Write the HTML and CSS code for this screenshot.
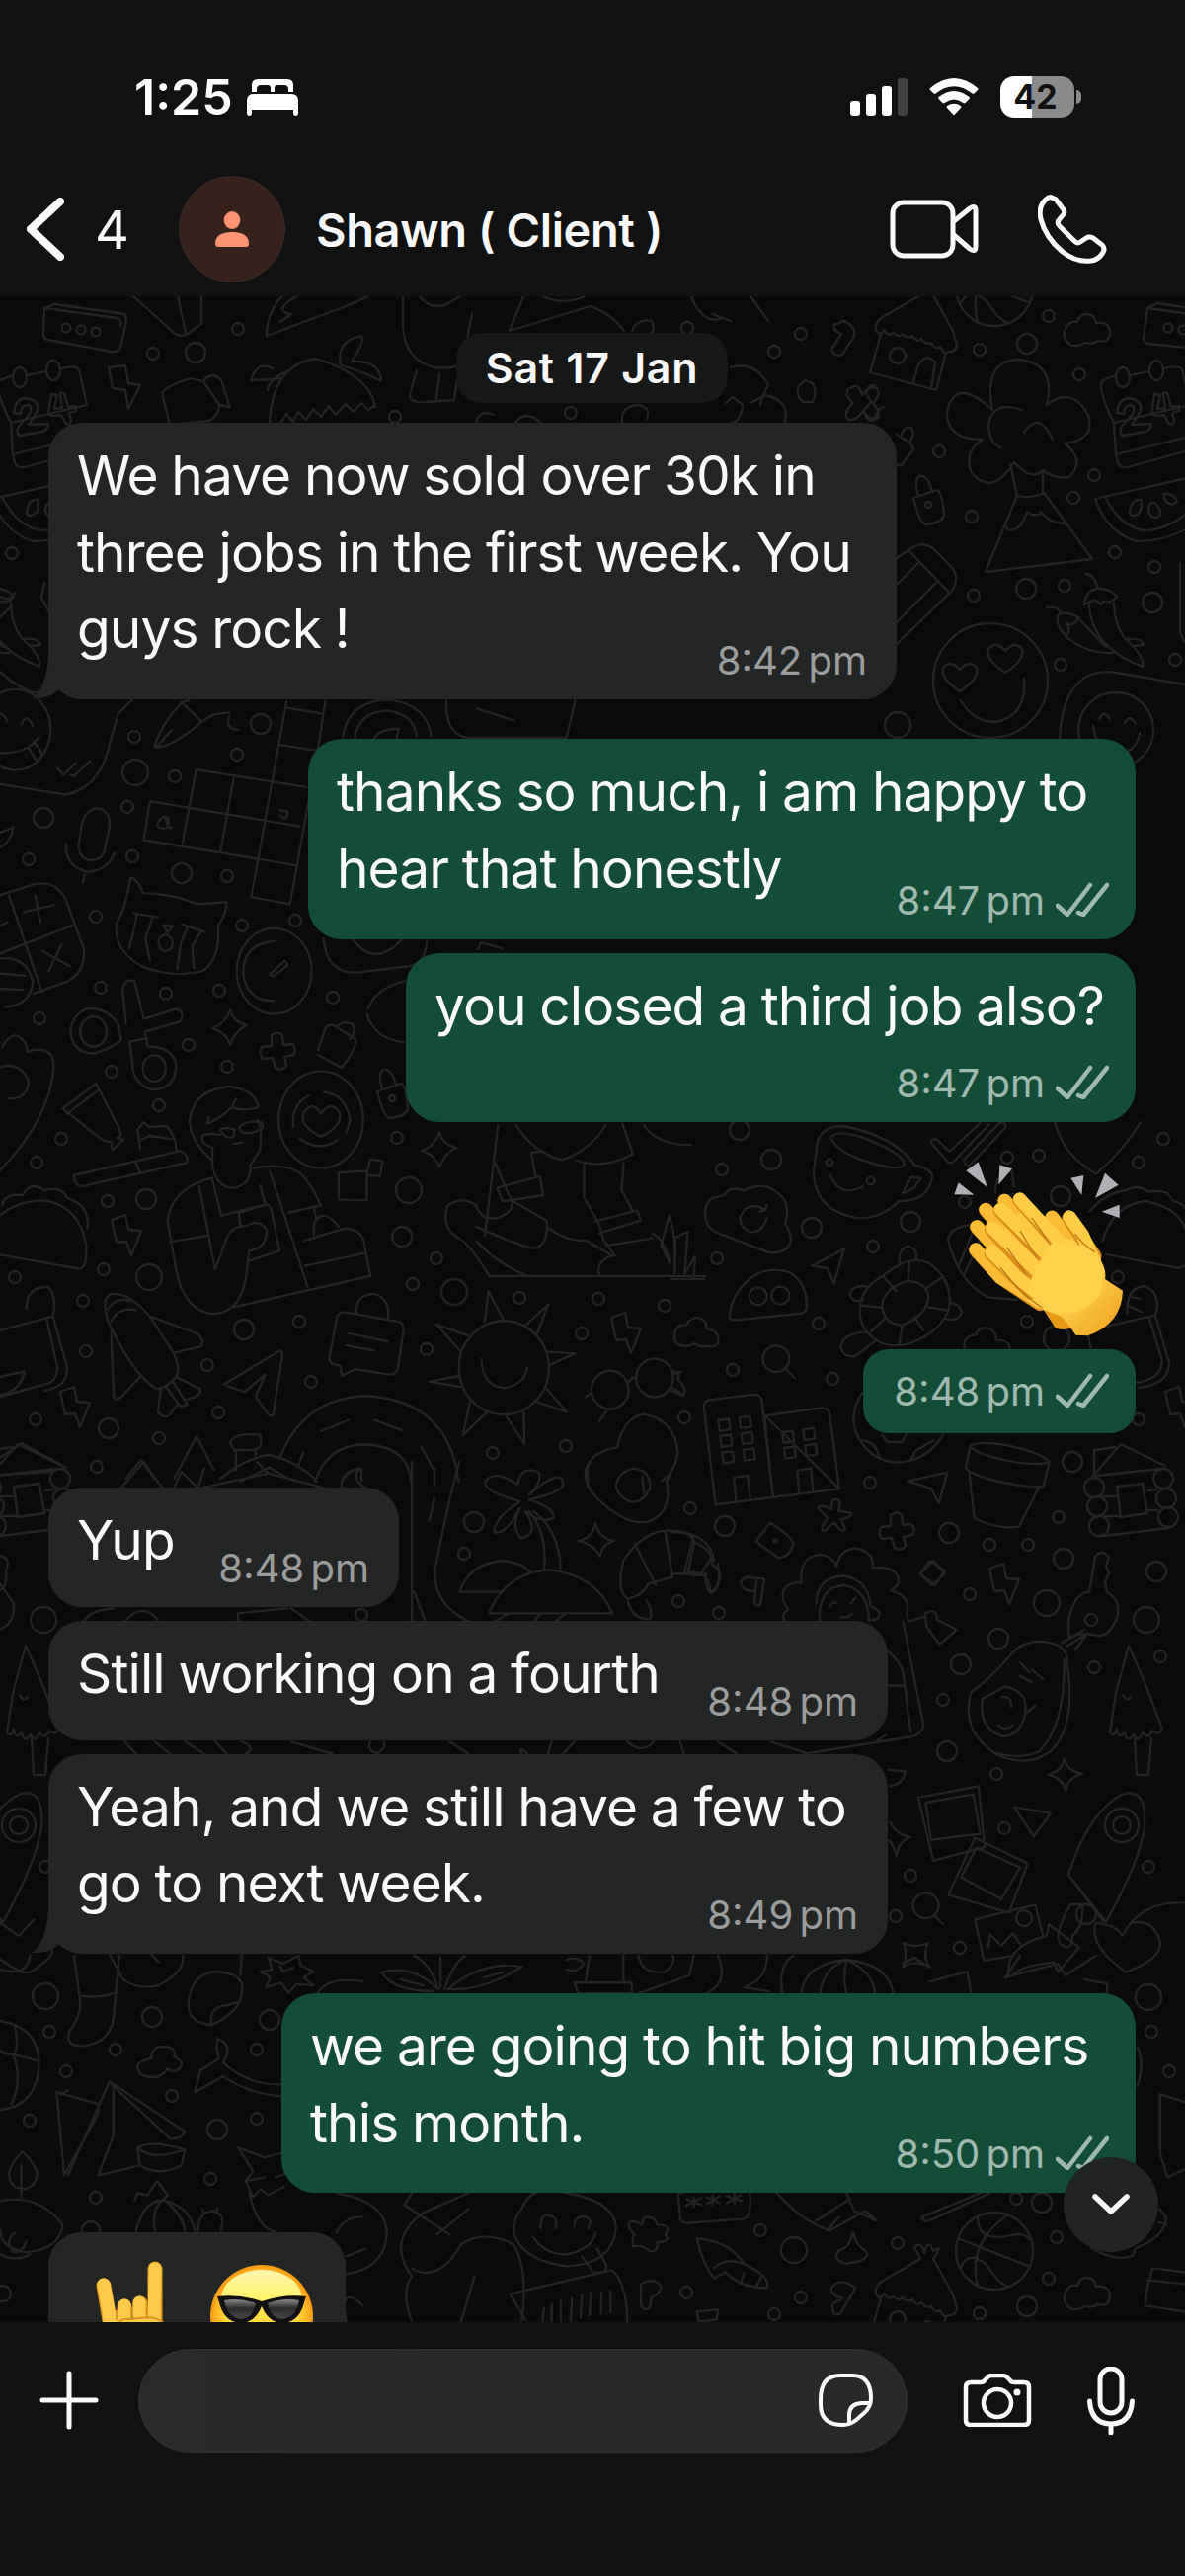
FILE: index.html
```html
<!DOCTYPE html>
<html lang="en">

<head>
  <meta charset="UTF-8">
  <meta name="viewport" content="width=device-width, initial-scale=1.0">
  <title>Shawn ( Client )</title>
  <link rel="stylesheet" href="styles.css">
</head>
<body>
  <div class="phone">

    <!-- Status bar -->
    <div class="status-bar">
      <span class="clock">1:25</span>
      <svg class="bed" width="52" height="37" viewBox="0 0 52 37" fill="#fff">
        <path d="M5 13V6Q5 0 11 0H41Q47 0 47 6V13H42V10Q42 6 38 6H31Q28 6 28 9V13H24V9Q24 6 21 6H14Q10 6 10 10V13Z"/>
        <path d="M0 22Q0 15 7 15H45Q52 15 52 22V34Q52 37 49.500 37T47 34V31H5V34Q5 37 2.500 37T0 34Z"/>
      </svg>
      <div class="status-icons">
        <svg width="58" height="38" viewBox="0 0 58 38" fill="#fff">
          <rect x="0" y="23" width="10" height="15" rx="3"/>
          <rect x="16" y="16" width="10" height="22" rx="3"/>
          <rect x="32" y="8" width="10" height="30" rx="3"/>
          <rect x="48" y="0" width="10" height="38" rx="3" fill="#414141"/>
        </svg>
        <svg width="50" height="38" viewBox="0 0 50 38" fill="#fff">
          <path d="M1 10Q25-10 49 10Q50 11 49 12L45.500 15.500Q44.500 16.300 43.500 15.500Q25 1 6.500 15.500Q5.500 16.300 4.500 15.500L1 12Q0 11 1 10Z"/>
          <path d="M9.500 19Q25 7 40.500 19Q41.500 20 40.500 21L36.500 25Q35.500 25.800 34.500 25Q25 18 15.500 25Q14.500 25.800 13.500 25L9.500 21Q8.500 20 9.500 19Z"/>
          <path d="M18 28Q25 23.500 32 28Q33 29 32 30L26 36.600Q25 37.600 24 36.600L18 30Q17 29 18 28Z"/>
        </svg>
        <div class="battery"><span>42</span></div>
      </div>
    </div>

    <!-- Contact header -->
    <div class="header">
      <svg class="back" width="38" height="64" viewBox="0 0 38 64"><path d="M34 4L4 32L34 60"/></svg>
      <span class="unread">4</span>
      <div class="avatar">
        <svg width="34" height="36" viewBox="0 0 34 36"><ellipse cx="17" cy="9" rx="8.300" ry="9"/><path d="M0 33Q0 21 17 21T34 33Q34 36 31 36H3Q0 36 0 33Z"/></svg>
      </div>
      <span class="name">Shawn ( Client )</span>
      <div class="actions">
        <svg width="90" height="60" viewBox="0 0 90 60"><rect x="3" y="3" width="61" height="54" rx="11"/><path d="M65 22L81 9Q87 5 87 11V48Q87 54 81 50L65 36"/></svg>
        <svg width="70" height="70" viewBox="0 0 70 70"><path d="M16 4Q12 1 8 5Q0 12 3 25Q8 44 25 58Q39 69 54 67Q61 66 65 60Q69 55 65 51L56 44Q52 42 49 44L43 48Q40 50 37 47L22 32Q19 29 21 26L26 20Q28 17 25 14L19 6Q18 4 16 4Z"/></svg>
      </div>
    </div>

    <!-- Conversation -->
    <div class="chat">
      <svg class="wallpaper" width="1200" height="2051" viewBox="0 300 1200 2051">
        <defs>
          <g id="ball"><circle r="39"/><path d="M-35-12L34 15M14-37Q-28-8-17 36M-17-35Q-18-10 12-15Q30-20 35-12M-34 16Q-25-2-7 15Q5 34 14 36"/></g>
          <g id="bolt"><path d="M-15-16L-1-21L2-6L15-5L5 20L0 6L-10 7Z"/></g>
          <g id="cloud"><path d="M-17 15Q-27 8-21-3Q-16-10-10-8Q-8-16-1-16Q8-16 9-7Q23-9 23 3Q22 14 11 11Q6 15-2 13Q-10 18-17 15Z"/></g>
          <g id="spark"><path d="M1-18Q3-6 18-2Q6 3 1 18Q-3 5-17 1Q-4-3 1-18Z"/></g>
          <g id="cross"><path d="M-6-16Q0-21 5-16L6-6L15-7Q20-2 16 4L7 6L9 15Q4 21-2 17L-5 7L-15 8Q-19 3-16-4L-6-5Z"/></g>
          <g id="lock"><path d="M-15-7L9-15Q14-14 16 10Q15 18-2 20Q-8 21-15-7ZM-10-9Q-15-28-8-29Q0-30 4-13"/><circle r="3"/></g>
          <g id="heart"><path d="M0 15Q-20 2-17-9Q-9-18 0-7Q9-18 17-9Q20 2 0 15Z"/></g>
          <g id="house">
            <path d="M-28-48L-66-26Q-75-20-73-12Q-69-6-64-13Q-62-6-55-10Q-50-4-46-9Q-41-3-36-7Q-31 1-27-4Q-22 3-17 0Q-13 8-8 4Q-4 13 0 9Q8 10 9 2L5-12L-15-48M-28-48L-34-60Q-26-66-24-54Q-20-70-15-56Q-4-64-15-48M-68-8L-79 30L-12 48L-2 10M-35 40L-30 22Q-22 10-13 20L-17 46"/><circle cx="-51" cy="13" r="8"/>
          </g>
          <g id="tree">
            <path d="M125 115Q115 65 152 64Q190 68 180 110Q205 90 222 120Q230 145 198 149Q220 165 203 183Q190 186 176 176Q165 188 147 168Q125 203 104 179Q95 158 115 145Q78 145 79 117Q87 80 125 115M155 115Q125 105 121 130Q122 150 134 153M157 138Q172 115 186 145M143 170L150 202Q163 205 176 200V178M150 202L118 279L226 266L178 200M160 218Q153 240 140 236L138 230M160 218Q170 225 174 218Q183 230 198 230"/>
          </g>
          <g id="calendar">
            <path d="M250 80L237 85Q230 92 248 128L250 160L320 143M250 160L252 169Q255 174 262 173L345 150M265 80L283 76M299 73Q318 68 318 78L325 110L248 128"/>
            <ellipse cx="257" cy="82" rx="7" ry="10"/><ellipse cx="291" cy="75" rx="7" ry="10"/>
            <path d="M251 118Q253 100 268 104Q278 108 274 118L266 130L286 129Q286 135 280 137L257 141Q250 136 262 125Q272 115 266 110Q258 110 258 119ZM289 99L286 119Q289 122 299 120L303 128Q308 132 309 126L307 118L314 116V111L306 112L302 98Q297 96 298 100L300 113L292 114L295 100Z"/>
            <path d="M229 205L340 180M229 205Q240 238 270 248Q310 248 335 225M240 205Q255 233 278 237Q305 237 330 212M264 218Q266 205 275 206Q278 220 268 222Q264 222 264 218ZM283 215Q286 202 294 215Q297 224 289 224Q283 222 283 215ZM298 200Q307 198 312 207Q307 214 300 207Z"/>
          </g>
          <g id="chillies">
            <path d="M219 281Q228 281 232 296M218 312Q220 295 235 296Q247 297 251 305L242 310Q239 306 235 312Q229 306 226 308Q223 310 218 312ZM223 313Q225 355 277 375Q280 365 258 345Q248 330 248 310M180 315Q190 313 195 321M200 345Q187 330 192 322Q200 318 212 325Q208 335 201 331Q204 339 200 345ZM199 344Q220 362 247 361M212 326L240 355M262 347Q275 345 278 353L267 354"/>
          </g>
          <g id="cabin">
            <path d="M426 365L455 332L500 354M430 364L495 357M428 361V338L450 335M437 385H453M483 379L491 378M439 405H455M484 399H492M437 425L503 417M451 375L477 372L482 402L455 406Z"/>
            <circle cx="428" cy="376" r="10"/><circle cx="431" cy="395" r="10"/><circle cx="433" cy="415" r="10"/><circle cx="498" cy="367" r="10"/><circle cx="501" cy="387" r="10"/><circle cx="503" cy="406" r="10"/>
          </g>
          <g id="pine"><path d="M0-66L-13-18L-19 22Q-14 28-12 18Q-11 30-4 22Q-2 34 5 24Q10 34 14 22Q20 30 24 20Q30 26 34 18L14-34ZM6 28L8 65H20L23 28M-6-16Q-2-8 2-14"/></g>
          <g id="rocket"><path d="M-36 18Q-15-48 20-64Q44-70 41-30Q36 5 2 66ZM-36 18L0 66M-34 48Q-52 80-44 88Q-33 98-32 80Q-20 70-22 48Z"/><circle cx="18" cy="-32" r="17"/><circle cx="18" cy="-32" r="9"/></g>
          <g id="guitar"><path d="M6-56Q12-64 20-56L17-46L20-40L16-30L18-20Q33-12 28 6Q20 26 8 24Q-8 20-20 26Q-24 4-12-14Q-4-22 0-20ZM-2 22L-14 38"/><circle cx="2" cy="8" r="6"/></g>
        </defs>

        <use href="#ball" x="1007" y="291"/><use href="#ball" x="1007" y="2279"/>
        <use href="#house" x="960" y="347"/><use href="#house" x="960" y="2335"/>
        <use href="#tree" x="880" y="300"/>
        <use href="#calendar" x="880" y="300"/><use href="#calendar" x="-237" y="300"/>
        <use href="#chillies" x="880" y="300"/><use href="#chillies" x="-237" y="300"/>
        <use href="#cloud" x="1101" y="334"/><use href="#cloud" x="1101" y="2322"/>
        <use href="#cabin" x="680" y="1130"/><use href="#cabin" x="-437" y="1130"/>
        <use href="#pine" x="1143" y="1732"/><use href="#pine" x="26" y="1732"/>
        <use href="#rocket" x="1118" y="1880"/><use href="#rocket" x="1" y="1880"/>
        <use href="#guitar" x="1103" y="1632"/>

        <!-- next to the first incoming message -->
        <path d="M1162 312L1172 307L1220 314M1162 312L1158 343Q1158 347 1164 348L1220 354M1162 312L1220 320"/>
        <path d="M45 312L55 308L127 318L128 325L122 352Q120 357 113 356L48 344Q43 343 44 337ZM45 312L118 322Q124 324 122 330"/>
        <circle cx="67" cy="332" r="4.500"/><circle cx="82" cy="334" r="4.500"/><circle cx="97" cy="336" r="4.500"/>
        <circle cx="1183" cy="332" r="4.500"/><circle cx="1198" cy="334" r="4.500"/>
        <path d="M908 440L922 448L925 455L912 472L908 470M913 440Q915 432 922 433Q928 437 921 448"/>
        <use href="#lock" x="940" y="511"/>
        <path d="M908 565L920 557Q935 545 948 558L965 576Q972 586 964 598L908 652M920 557L962 601M908 592L930 570M908 630L950 588"/>
        <circle cx="1003" cy="689" r="58"/>
        <use href="#heart" x="972" y="685"/><use href="#heart" x="1018" y="666"/>
        <path d="M973 709Q985 731 1008 731Q1040 725 1037 687"/>
        <path d="M1073 748Q1075 700 1100 685Q1115 678 1130 681L1200 693M1195 570V640Q1198 650 1205 655"/>
        <circle cx="1130" cy="739" r="38"/><path d="M1113 728Q1118 718 1124 728M1139 732Q1144 722 1150 733M1107 735Q1110 765 1140 762Q1153 755 1154 742"/>
        <path d="M886 390Q878 390 877 398L882 407L875 415Q876 426 884 426L890 415L895 412M858 395Q870 385 873 400Q880 390 888 393Q893 400 884 408Q893 418 888 424Q880 425 874 416Q866 428 858 424Q854 416 864 408Q856 402 858 395Z"/>
        <path d="M815 385L823 388Q828 397 823 407L813 407Q806 400 808 392ZM850 328Q852 322 860 328Q868 335 864 342L853 359Q845 362 842 354L852 338Q843 335 845 328Z"/>

        <!-- top strip and palm hut -->
        <path d="M135 300L175 336Q182 342 190 338L204 328V300M180 300L188 337M270 340Q270 305 305 285M270 340L350 310Q378 300 382 290M284 326L295 318Q275 315 300 300M273 429Q275 370 320 363Q375 380 380 412M285 427L290 419L297 427L302 417L310 425L317 414L325 422L333 411L340 420L350 409L358 417L366 408L373 415L380 410M276 373Q260 365 254 385Q270 385 284 383M290 376Q272 385 271 395M345 370Q340 345 366 340Q370 345 356 366Q385 365 386 386Q365 375 345 370M164 398Q170 390 193 383L206 386L222 410Q222 420 212 426L172 430Z M206 386Q214 375 224 385L233 412L222 410"/>
        <path d="M110 372L127 370L130 388L142 390L130 414L127 395L114 393ZM408 300V330Q410 365 440 372Q460 375 472 365M425 300Q440 320 465 300M478 317L470 360M422 375L415 400Q415 408 430 407L460 405M445 378L442 404M465 372L460 404M530 300L516 335L598 310Q620 318 632 335M550 300Q570 310 592 300M700 300Q712 330 732 322M740 325L722 318M760 300L778 325M640 335Q645 322 660 325Q665 335 655 342M740 372Q765 365 778 390Q772 400 770 410M735 408L742 402L752 410Q750 428 740 428M760 408L775 400Q800 405 795 428M630 428Q628 412 645 410Q660 412 655 424M482 428Q485 414 500 420M522 428Q532 414 548 428"/>
        <path d="M0 604Q10 610 15 600M0 625L10 615M0 680L12 690Q35 705 40 700M45 590L42 605L50 620"/>

        <!-- left column beside the outgoing messages -->
        <g transform="translate(0 700) scale(.4464 .5102)">
          <circle cx="35" cy="76" r="80"/>
          <path d="M0 44Q12 48 16 60M48 66Q60 40 74 68M0 122Q60 125 90 90M64 110L80 134Q95 140 94 120L76 98M0 184L150 205Q230 190 250 100L268 45L300 16M130 152L144 166L172 142M160 166L168 168L204 138"/>
          <path d="M350 108Q370 60 412 22L458 60Q400 105 356 112ZM356 110L390 76M412 22L430 16M458 60L484 46L520 42M520 50Q510 75 540 76M445 155L695 190M340 218L680 268M326 295L672 345M570 408L658 422M445 155L414 302M340 218L326 295M530 172L500 318M650 20L570 408M738 18L722 110L658 422M648 32L728 44M635 106L722 118"/>
          <path d="M358 262Q365 245 382 250Q385 275 370 272Q355 272 358 262M376 250Q380 275 390 270M635 236L652 238Q652 260 635 246M778 90Q790 20 878 16Q970 25 978 90M805 92Q815 40 878 38Q940 45 945 90M850 92Q860 75 905 74L900 92M1012 18Q1010 85 1060 92H1285L1305 18M1082 34L1166 58"/>
          <path d="M186 262Q200 225 232 234Q252 245 248 270L236 320Q225 338 198 334Q178 328 178 305ZM150 302Q148 350 200 358Q245 355 260 320M192 362L188 380M0 310Q25 300 30 270L0 280"/>
          <path d="M0 404L80 382Q130 375 150 415L190 510Q195 555 155 575L75 600M20 404L95 596M0 520L165 464M54 438L122 424M80 406L92 458M95 515L158 545M140 502L110 556M0 465L18 458M0 530Q60 525 74 575Q70 625 10 626M0 560L58 564M0 590L52 592"/>
          <path d="M296 370Q310 370 325 400Q350 400 400 408L450 422L514 418Q515 440 495 465Q500 530 460 555Q390 570 320 545Q255 510 265 460Q285 430 296 370ZM302 440L358 448M412 462L466 478M310 444L302 480L292 512M346 448L330 490L340 535M425 468L410 500L402 552M455 478L436 505L440 550M370 464L392 466L380 478ZM365 512Q350 490 375 482Q400 490 388 510Q375 520 365 512Z"/>
          <circle cx="622" cy="555" r="85"/><path d="M625 495Q550 500 552 560Q560 615 622 614M612 562L645 535Q655 540 650 545L620 566Z"/>
          <path d="M286 660L278 590Q285 568 305 575L326 650L400 630Q420 635 410 655L330 675M330 680L335 705Q395 705 400 745Q395 790 345 790Q300 780 300 735L294 695M294 695L335 688M275 692L268 660Q240 625 195 630Q160 645 160 680Q170 720 215 718Q250 710 275 692"/>
          <circle cx="212" cy="675" r="30"/><circle cx="350" cy="748" r="26"/>
          <path d="M0 950Q80 880 110 800Q130 740 115 720Q95 705 62 715Q60 690 36 682Q18 685 5 705M0 745Q50 735 65 775Q60 810 20 808M142 828L218 778L272 870Q278 885 265 885L280 890L255 910L252 895L232 890ZM152 838L225 790M168 960L408 912Q430 920 424 935L185 982Q168 980 168 960ZM308 934L318 956M318 908L312 870L325 855L338 864L378 862Q400 885 400 912M320 890L340 882L390 888"/>
          <path d="M480 930Q430 890 430 850Q440 790 520 784Q580 790 586 825Q550 835 525 825Q505 845 470 858L474 845M536 808L525 825M480 905Q450 895 462 880L480 878L500 880M482 905V940Q490 985 530 985Q570 980 568 940L590 910L592 870L585 850M500 870Q510 862 532 870L530 884Q510 890 500 870ZM542 865Q560 850 594 855L596 865Q575 880 550 875ZM530 898L550 895M482 965Q390 985 380 1050L400 1150Q420 1235 490 1235Q550 1230 560 1150L565 1110Q605 1105 605 1070Q590 1045 560 1060L545 1062L542 1035L605 1018Q615 1020 618 1040L634 1110L565 1130M530 1222L840 1160L825 1090Q815 1065 780 1066L690 1090M385 1092L470 1080M452 982L488 1148L510 1095Q520 1065 545 1062M482 970L502 1040L595 1020M575 946Q640 935 680 955Q705 975 728 1020L655 1034M612 952L698 1182M590 980L602 1018M692 1140L825 1115M712 1078L712 1058Q730 1020 768 1062M712 1025L718 1050"/>
          <circle cx="728" cy="850" r="96"/><path d="M728 884Q675 860 690 835Q710 810 728 838Q750 810 770 835Q780 860 728 884ZM665 865Q660 820 700 802M735 795Q785 800 794 850L786 875M680 888Q725 915 766 890"/>
          <path d="M768 955L832 952V1010L768 1008ZM840 928L868 932L862 962L832 960ZM835 630Q850 590 918 575M832 640Q850 690 915 696M734 490Q740 560 810 558L930 545Q965 540 968 495M800 492Q850 550 912 492M1085 512L1090 498L1140 510"/>
          <path d="M1130 860L1100 1080M1120 930L1160 1010L1240 1050M1170 860Q1210 915 1275 930Q1340 910 1375 860M1205 915L1232 912M1205 915L1215 965M1128 985L1225 962L1232 1000L1140 1012ZM1240 1050Q1245 1095 1215 1105Q1190 1105 1080 1062M1160 1010Q1170 1030 1130 1045Q1090 1050 1080 1020Q1050 1000 1015 1020Q1000 1065 1040 1085Q1065 1095 1110 1160H1600M1080 1090Q1120 1130 1195 1160M1245 1065Q1280 1090 1330 1090L1390 1120Q1350 1130 1360 1160M1325 935L1325 1005L1358 1055L1370 1090L1395 1120M1415 935L1410 990L1435 1030M1350 1052L1445 1030L1454 1050L1360 1075M1375 1100L1480 1085M1308 930Q1370 950 1436 918L1412 858M1460 860Q1490 900 1568 900M1480 1075Q1510 1090 1520 1135L1500 1100L1518 1040Q1535 1080 1530 1135"/>
          <path d="M0 1040Q40 1010 100 1010Q180 1020 196 1100Q198 1150 175 1145L0 1118M5 1020Q10 995 50 1000Q70 970 100 990Q140 980 152 1005Q205 1020 198 1065M60 1225Q60 1180 110 1182Q130 1200 120 1240L0 1268M105 1242L130 1340Q132 1370 100 1375L0 1400M120 1240L152 1340Q155 1380 100 1388M0 1360Q50 1350 56 1350Q45 1390 0 1396"/>
          <path d="M245 1250Q230 1205 250 1196Q290 1190 340 1240L395 1315Q410 1345 400 1360Q375 1385 355 1384Q310 1360 265 1285ZM245 1225Q265 1200 295 1210M252 1250Q270 1220 310 1228M340 1240L450 1275Q465 1290 455 1300L396 1312M252 1270L258 1400Q265 1410 275 1400L318 1360M365 1384L358 1430Q375 1445 385 1435L405 1412M375 1378L410 1420L425 1415L392 1370M400 1360L455 1385Q455 1400 420 1405"/>
          <path d="M508 1375L635 1308Q642 1310 640 1320L620 1435Q612 1442 605 1430L580 1400L602 1355L555 1390L515 1378M765 1240Q770 1230 785 1232L900 1250Q918 1252 915 1270L902 1345Q895 1358 880 1355L805 1345L775 1358L772 1338L755 1335Q745 1330 748 1318ZM790 1274L880 1290M785 1298L850 1308M808 1232Q808 1195 850 1196Q885 1205 880 1245"/>
          <ellipse cx="1143" cy="1342" rx="102" ry="93"/><path d="M1092 1325Q1095 1380 1145 1382Q1190 1375 1196 1342M1100 1250L1108 1190L1144 1250M1190 1260L1244 1216L1218 1275M1240 1310L1304 1314L1244 1338M1236 1380L1286 1430L1212 1408M1188 1430L1190 1494L1148 1438M1105 1430L1050 1476L1066 1410M1045 1380L974 1370L1042 1358M1045 1310L990 1256L1068 1280"/>
          <ellipse cx="1384" cy="1386" rx="42" ry="38"/><ellipse cx="1485" cy="1362" rx="42" ry="38"/><path d="M1425 1372Q1432 1360 1444 1362M1342 1392L1328 1400M1378 1425L1360 1448M1525 1355L1545 1350M1520 1380L1550 1395"/>
          <path d="M635 1520Q690 1400 835 1398Q1020 1410 1040 1568M715 1568Q740 1495 830 1494Q930 1500 932 1568M728 1468L790 1446M850 1446L912 1466M955 1498L986 1548M688 1510L675 1540M775 1568Q790 1545 820 1542V1568M522 1490Q530 1470 590 1475Q600 1505 570 1505H530ZM535 1508V1545M580 1508V1515M500 1562Q560 1520 610 1515Q680 1530 720 1568M545 1568L610 1540L670 1568M395 1562L446 1478L485 1545M285 1562L320 1525L350 1562M0 1520L50 1492L150 1540M0 1555L120 1548M1335 1568Q1320 1510 1400 1500Q1415 1440 1460 1434Q1530 1445 1538 1510Q1530 1550 1500 1568"/>
        </g>
        <use href="#spark" x="232" y="1040"/><use href="#spark" x="444" y="1164"/>
        <use href="#cross" x="281" y="1064"/><use href="#lock" x="397" y="1112"/>
        <path d="M322 1063L330 1040Q335 1035 341 1040L360 1052Q362 1060 346 1081L322 1068M341 1040Q347 1032 357 1037Q362 1045 354 1052"/>
        <use href="#bolt" x="128" y="1251"/><use href="#bolt" x="76" y="1425"/><use href="#bolt" x="634" y="1350"/>

        <!-- around the clap and the building block -->
        <g transform="translate(680 1130) scale(.3333)">
          <path d="M440 110Q440 30 520 30Q680 60 740 150Q790 160 792 185Q780 260 690 258Q640 310 570 310Q430 290 432 160ZM484 65Q500 40 580 65Q700 110 708 145Q690 170 600 140Q500 110 484 65ZM482 178Q510 250 582 214M712 215L728 185L758 188L735 220L702 234Z"/>
          <circle cx="480" cy="141" r="10"/><circle cx="605" cy="196" r="12"/>
          <path d="M110 330Q90 280 120 250L160 240Q175 210 220 226Q290 190 340 250Q360 290 345 325Q380 380 345 405Q320 420 290 412L160 362Q120 350 110 330ZM290 310Q275 355 240 352Q200 335 212 300Q235 255 285 285L268 290M285 285L290 270"/>
          <path d="M176 610Q180 550 230 500Q290 450 360 475Q415 510 410 585Q405 598 390 600L190 620Q176 618 176 610Z"/><circle cx="263" cy="547" r="27"/><circle cx="331" cy="545" r="27"/>
          <path d="M425 455L524 404L494 508L474 462ZM0 495H100M10 480L12 370L50 350L40 480L72 425L68 490"/>
          <path d="M575 570Q580 520 650 480Q720 420 780 445Q860 500 842 590Q820 640 770 670Q700 710 640 690Q560 650 575 570ZM640 570Q650 520 720 500Q785 510 780 555Q770 610 700 635Q640 630 640 570ZM645 488L682 532M724 445L718 498M820 490L772 525M840 590L780 580M765 650L738 610M692 695L700 638M605 655L648 615M575 575L640 582M692 445Q690 400 718 396Q755 405 740 440M600 518Q550 510 542 540Q545 568 582 560M845 565Q885 575 880 600Q870 625 830 615M590 655Q520 660 514 700Q520 735 560 728L620 682"/>
          <path d="M788 80Q790 65 808 72L845 108L938 20M788 80L840 140Q850 145 860 135L965 25M890 130L995 22Q1015 15 1015 35L905 150Q885 150 890 130M1165 18Q1190 120 1290 175Q1370 110 1425 18M985 230Q980 200 1010 170L1035 168L1040 215M840 375Q850 335 910 330M840 375Q870 500 960 550L1050 558M875 450L920 340M890 480L945 360M1270 290Q1320 230 1385 225Q1410 205 1450 230Q1510 220 1520 255Q1560 270 1560 280M1310 380Q1340 270 1440 258Q1540 280 1560 340M1320 420L1540 462L1560 455M1385 600Q1380 520 1440 516Q1490 540 1470 605L1270 650M1450 610L1490 740Q1490 800 1410 810M1470 605L1512 750Q1510 815 1420 825M1265 660L1275 710M1400 550L1425 555M1385 575L1430 595"/>
          <path d="M10 660Q15 630 45 635Q60 605 90 615Q110 625 105 645Q145 650 143 685Q135 705 110 698Q90 705 70 690Q50 705 25 695Q5 690 10 660ZM890 705Q885 665 925 665Q935 635 965 645Q990 655 985 680Q1030 680 1028 710"/>
          <circle cx="318" cy="737" r="40"/><path d="M345 765L374 795M0 775Q30 770 20 800Q50 830 35 850L0 835"/>
          <path d="M134 1180L98 880Q100 865 115 862L250 846Q270 846 274 862L308 1155M284 910L455 886Q475 886 480 900L510 1132ZM134 1180L510 1132M196 1170L190 1098L232 1092L240 1165M388 1145L382 1075L424 1070L430 1140M283 910L308 1155"/>
          <path d="M142 924L174 920L178 952L146 957ZM206 916L238 912L242 944L210 948ZM148 972L180 968L184 1000L152 1005ZM212 964L244 960L248 992L216 996ZM154 1022L186 1018L190 1050L158 1055ZM218 1014L250 1010L254 1042L222 1046ZM336 960L368 956L372 988L340 992ZM400 952L432 948L436 980L404 984ZM342 1008L374 1004L378 1036L346 1040ZM406 1000L438 996L442 1028L410 1032Z"/>
          <path d="M580 840Q540 900 560 960Q600 1050 690 1052Q780 1045 825 968M580 985Q625 990 632 1040M640 968L655 990H700L712 968M730 1040L740 1018L795 985M720 1108L838 1082L812 1176L790 1132Z"/>
          <path d="M908 1000Q940 985 1020 1000Q1120 1020 1148 1050L1130 1125Q1100 1130 1020 1115Q920 1095 894 1070ZM910 1005Q930 1030 1050 1052Q1120 1060 1146 1052M905 1085L920 1220Q980 1255 1055 1248L1115 1130"/>
          <path d="M445 1190Q450 1175 485 1195L490 1165Q510 1160 512 1175L508 1200L545 1205Q550 1220 515 1225L528 1255Q520 1270 495 1235L465 1260Q445 1255 475 1222ZM256 1292L300 1235Q370 1280 370 1300Q360 1340 325 1342ZM755 1390L785 1350L830 1380L800 1425Z"/>
          <circle cx="316" cy="1291" r="5"/>
          <path d="M210 1420Q215 1395 250 1402L282 1405L270 1485Q255 1490 252 1480L258 1410M210 1420Q220 1445 250 1442M0 1265Q60 1260 70 1295Q130 1320 122 1360Q150 1380 148 1400Q140 1445 115 1445Q100 1420 105 1390Q85 1400 50 1390H0M70 1295L50 1385M122 1340L90 1390"/>
          <path d="M345 1535Q330 1510 355 1500Q320 1450 355 1425Q370 1415 395 1418Q385 1340 450 1332Q490 1335 502 1368Q510 1315 560 1312Q620 1325 610 1372Q685 1365 690 1410Q690 1430 665 1440Q730 1460 715 1510L720 1535M440 1480Q440 1400 525 1396Q600 1410 605 1490M450 1535Q445 1430 525 1425Q600 1440 600 1535M605 1490Q640 1500 630 1520Q620 1535 600 1528M480 1492Q490 1475 500 1478M545 1480L560 1462M515 1522Q535 1525 548 1512M720 1535L770 1520"/>
        </g>
        <use href="#cross" x="908" y="1550"/><use href="#bolt" x="1017" y="1604"/><use href="#bolt" x="1195" y="1425"/>

        <!-- between and beside the lower messages -->
        <g transform="translate(0 1480) scale(.7653 .3333)">
          <path d="M160 80L190 0L215 80M230 80L240 30L262 80L270 20M265 80L355 35L430 80M355 35L340 0M452 80Q450 30 475 20Q465 60 485 80M545 0V485M608 0Q595 100 578 300Q565 420 620 485M575 20V70M575 110L568 180M548 395L562 480"/>
          <path d="M688 120Q640 90 642 60Q655 20 685 70Q688 10 712 30Q720 55 700 100Q740 20 745 60Q750 90 700 115Q735 140 732 170Q715 190 695 150Q715 220 690 232Q675 200 688 140Q670 220 655 215Q650 180 688 120M700 150Q725 220 720 325M706 150Q740 210 742 325M608 395Q620 310 665 300Q690 305 702 335M608 395H665M648 455Q670 335 728 328Q790 345 810 460H648M655 485L672 462M706 485L715 462M735 485L748 462"/>
          <path d="M780 0Q765 50 790 110Q830 200 860 180Q890 150 882 60L895 0M840 20Q862 30 860 80Q850 130 832 120Q815 100 815 70Q820 25 840 20ZM850 45L852 95"/>
          <path d="M825 300Q850 210 885 208Q940 215 945 300M825 300Q815 390 830 415Q850 410 858 370L890 350M840 250L868 375M880 210L890 350M918 225L905 340M830 415Q835 480 860 478Q865 450 855 420M905 340Q940 320 940 400Q955 380 950 310"/>
          <path d="M1195 485L1222 800Q1220 830 1205 835L1065 887M1172 570Q1190 600 1195 640L1205 820M1175 680H1195M1172 830L1160 848M1175 935L1198 940Q1195 980 1178 985"/>
          <path d="M1375 545Q1415 550 1412 610Q1425 800 1390 880Q1360 930 1320 890Q1270 820 1285 700Q1310 660 1340 580Q1350 550 1375 545ZM1408 600Q1410 800 1375 880Q1350 905 1320 885M1405 550L1435 510M1412 560L1440 520M1330 682Q1365 700 1355 780Q1345 840 1325 832Q1295 810 1300 720ZM1325 715Q1340 710 1338 745M1320 800Q1330 820 1340 800M1350 610L1362 640M1365 630L1380 660M1350 650L1365 670M1360 760L1370 740"/>
          <path d="M1215 1020L1295 985L1303 1170L1235 1212ZM1225 1035L1288 1010L1297 1130L1232 1148ZM1290 1142L1360 1220L1335 1370L1255 1315ZM1292 1172L1350 1232L1325 1328L1272 1262ZM1342 1048L1390 1068L1368 1138ZM1290 1390L1370 1345L1380 1440M1290 1390L1302 1515L1340 1500M1308 1475L1310 1435L1325 1470L1340 1432L1350 1465M1335 1560Q1330 1470 1385 1440L1388 1405L1428 1475L1400 1550L1395 1520Q1350 1530 1340 1560"/>
          <ellipse cx="1225" cy="1348" rx="17" ry="38"/><path d="M1236 1378L1248 1405"/>
          <path d="M1195 1460Q1210 1480 1228 1462Q1220 1500 1230 1535Q1210 1510 1195 1535Q1202 1490 1195 1460ZM1178 1095Q1185 1130 1205 1140Q1190 1150 1186 1198Q1182 1160 1176 1150M1450 1400Q1480 1410 1485 1440Q1510 1330 1568 1340M1450 1400Q1440 1470 1490 1550Q1550 1500 1530 1430Q1520 1390 1500 1400M1224 460Q1240 440 1240 480L1266 510L1243 555L1226 500ZM1235 300L1250 340L1233 375L1218 340ZM1408 900Q1412 940 1432 948Q1412 960 1411 1000Q1406 960 1387 950Q1406 940 1408 900ZM788 185Q792 230 812 240Q796 250 794 288Q786 250 766 240Q785 230 788 185Z"/>
          <path d="M165 850L180 887M205 850L225 887M245 850L270 887M285 850L300 887M320 850Q340 870 325 887M385 850L440 887M490 850Q485 880 500 885Q510 870 508 850M595 850L620 887M690 887Q685 862 698 887M725 887L730 850M760 850L745 887M900 850L905 887M830 850Q850 890 865 850M950 850L975 887M1020 850L1070 887M110 485Q120 450 150 445M165 485Q190 420 210 485M315 485V460L380 445M385 445L410 485M0 285Q15 290 8 330Q10 380 0 390M0 510Q20 490 18 430L0 370"/>
          <path d="M0 1400L25 1440L45 1390M0 1510Q30 1560 40 1550Q75 1500 68 1480M145 1495L160 1560M200 1495L210 1520M320 1495L318 1560"/>
        </g>

        <g transform="translate(0 1980) scale(.7653 .4005)">
          <path d="M98 0L105 100Q110 150 92 190Q85 230 110 228Q145 220 150 160L158 0M105 100Q130 110 155 92M155 40Q170 90 210 75Q245 40 242 0M0 35Q35 55 40 0"/>
          <path d="M345 40L360 35L355 5L375 20L395 0L398 25L415 40L402 55L415 75L392 72L382 95L372 68L352 80L358 55ZM370 25L375 40L388 30M420 95Q435 50 480 65M285 40Q325 45 320 90Q320 140 280 175Q245 170 250 110Q255 45 285 40ZM280 175Q275 130 300 125L318 115"/>
          <path d="M580 85Q545 20 505 42Q520 90 575 90M530 60L560 75M580 85Q570 20 548 0M583 80V5M588 85Q600 20 615 0M592 85Q640 90 690 28Q640 10 592 85M640 55L665 42M760 68H836V95H765ZM775 65L780 0M825 65V0M750 10Q765 0 772 20Q765 45 750 35M845 0Q850 50 880 40Q895 20 890 0M845 95L912 50L918 0M935 95Q965 70 950 0M985 80Q1015 60 1015 0M985 80L1018 90M1035 95Q1030 20 1050 0M1060 95Q1065 20 1120 10Q1175 20 1182 95M1085 95Q1090 30 1120 10Q1115 60 1120 95M1120 10Q1155 40 1158 95M1195 20L1210 5L1230 30M1330 55L1350 0M1330 55L1400 20L1410 50L1450 0M1230 65L1280 40L1285 95M1435 60L1465 70V100"/>
          <path d="M0 165Q50 180 52 270Q50 380 0 390M20 180Q25 240 18 250Q5 250 0 240M18 250Q30 320 15 375M18 250L50 265M75 345L130 375V400L85 555ZM80 350L90 340M130 555L150 455V330L145 318L90 555M145 318L245 445Q240 465 225 462L150 330M130 555L185 530M182 485Q200 465 245 490L240 530Q210 560 185 530ZM182 485Q200 520 245 490"/>
          <path d="M187 300Q172 270 200 260Q200 225 220 230Q235 235 230 255Q248 270 235 290Q225 295 222 285Q210 320 187 300ZM288 210Q310 225 295 270Q330 330 373 325M288 210Q285 240 290 260L265 290L258 345L295 305Q330 350 373 355M315 485L350 510L380 495M315 485L335 545L325 570L335 610L345 590L355 605L375 585M325 570L350 560M365 560L380 550M330 600Q340 690 365 698"/>
          <path d="M30 495Q65 560 35 590L20 585Q0 550 30 495ZM28 530V610M0 620Q50 600 83 680Q80 740 35 750Q0 740 0 690M0 755Q20 775 40 755M20 700Q5 720 18 750Q30 750 35 720M180 695Q190 620 215 618Q250 630 258 695M215 618Q200 640 205 695M218 618Q240 650 245 695M178 620L182 600L195 605L208 570L222 605L215 618M262 695Q262 650 280 645Q300 650 292 695M270 650L268 640M285 650L288 638"/>
          <path d="M445 600Q510 620 512 700Q510 790 458 805M445 700Q455 660 480 660M458 760L485 740M535 630L545 600M535 630L595 705M578 705L620 640M545 810Q510 720 560 650L620 600M545 810Q530 850 545 925M545 790Q580 830 610 730Q640 690 680 730Q700 800 690 925M628 810L610 925M690 640Q700 600 712 598M745 598Q815 620 815 690Q810 780 750 785Q690 770 680 700Q680 660 690 640M715 690Q715 655 725 655Q740 660 735 690M760 685Q760 655 775 660Q785 670 778 690M705 710Q720 755 750 755Q785 740 788 700M770 760L785 800Q805 805 802 780L790 740"/>
          <path d="M675 855L810 795Q830 830 830 925M675 855L695 920M718 925L720 890M730 925V880M742 925V870M755 925L757 865M768 915L770 858M780 910L782 850M795 905L796 850M808 900V848M458 925L455 880Q460 845 480 885M833 675Q835 665 850 680Q850 650 865 665L870 680Q890 680 880 705Q890 720 870 725Q870 755 858 745Q850 730 838 735Q835 710 840 705Q830 690 833 675ZM922 715Q965 720 985 780Q1020 810 1015 840Q980 840 960 800L945 815Q930 780 922 715ZM945 790Q960 760 985 780M980 830L985 800M1000 838L1008 810"/>
          <path d="M898 610Q895 600 905 598M898 610L900 665Q905 680 915 675L985 665Q995 660 992 600M918 610V635M908 615L928 630M928 612L908 632M943 605V630M935 610L952 625M952 608L935 628M972 602V627M962 608L982 620M980 605L962 625M1028 600Q1060 670 1098 695L1145 645L1160 670L1130 645L1120 600M1080 670L1125 615M1095 695L1110 660M1220 660L1300 598M1220 660Q1222 680 1235 665L1310 600M1130 700Q1130 730 1145 745Q1155 770 1120 778Q1100 770 1110 745Q1125 740 1128 700M848 830Q870 810 875 840Q870 860 862 862L860 890Q850 900 848 880ZM922 900L950 895L948 920L925 925ZM1100 840Q1110 810 1132 840L1112 905Q1100 915 1102 880L1115 865Q1100 860 1100 840ZM1518 840L1525 790L1568 800M1518 840L1515 885L1568 900M1518 820L1568 830M1535 350V500L1545 560L1568 540M1535 350L1568 370M1505 230Q1515 270 1505 330"/>
        </g>

        <!-- loose bubbles -->
        <g class="dots">
          <circle cx="155" cy="358" r="6"/><circle cx="198" cy="357" r="10"/><circle cx="241" cy="333" r="6"/><circle cx="400" cy="422" r="6"/><circle cx="578" cy="418" r="6"/><circle cx="696" cy="332" r="6"/><circle cx="811" cy="338" r="6"/><circle cx="784" cy="356" r="6"/><circle cx="992" cy="354" r="6"/><circle cx="1040" cy="348" r="10"/><circle cx="1062" cy="320" r="6"/><circle cx="1093" cy="379" r="6"/><circle cx="951" cy="457" r="6"/><circle cx="1108" cy="481" r="6"/><circle cx="1087" cy="504" r="6"/><circle cx="984" cy="523" r="6"/><circle cx="1129" cy="559" r="6"/><circle cx="1169" cy="574" r="6"/><circle cx="1167" cy="610" r="10"/><circle cx="1078" cy="593" r="6"/><circle cx="1039" cy="596" r="10"/><circle cx="986" cy="603" r="6"/><circle cx="1074" cy="673" r="6"/><circle cx="1190" cy="668" r="6"/><circle cx="909" cy="734" r="13"/><circle cx="12" cy="560" r="6"/>
          <circle cx="136" cy="746" r="6"/><circle cx="137" cy="782" r="13"/><circle cx="264" cy="733" r="10"/><circle cx="240" cy="764" r="6"/><circle cx="177" cy="786" r="6"/><circle cx="129" cy="817" r="6"/><circle cx="44" cy="828" r="10"/><circle cx="134" cy="867" r="6"/><circle cx="29" cy="870" r="6"/><circle cx="184" cy="884" r="10"/><circle cx="230" cy="887" r="6"/><circle cx="97" cy="928" r="6"/><circle cx="245" cy="937" r="6"/><circle cx="299" cy="932" r="6"/><circle cx="102" cy="1000" r="6"/><circle cx="168" cy="1006" r="6"/><circle cx="222" cy="1003" r="6"/><circle cx="337" cy="1010" r="6"/><circle cx="40" cy="1031" r="6"/><circle cx="191" cy="1058" r="6"/><circle cx="230" cy="1080" r="6"/><circle cx="113" cy="1085" r="6"/><circle cx="161" cy="1119" r="6"/><circle cx="62" cy="1153" r="6"/><circle cx="37" cy="1177" r="6"/><circle cx="402" cy="1152" r="6"/><circle cx="109" cy="1216" r="6"/><circle cx="148" cy="1214" r="10"/><circle cx="414" cy="1205" r="13"/><circle cx="407" cy="1252" r="10"/><circle cx="442" cy="1274" r="6"/><circle cx="105" cy="1285" r="6"/><circle cx="151" cy="1293" r="13"/><circle cx="15" cy="1293" r="6"/><circle cx="418" cy="1300" r="6"/><circle cx="460" cy="1308" r="13"/><circle cx="526" cy="1314" r="6"/><circle cx="606" cy="1315" r="6"/><circle cx="673" cy="1322" r="6"/><circle cx="84" cy="1317" r="6"/><circle cx="247" cy="1346" r="10"/><circle cx="303" cy="1338" r="6"/><circle cx="87" cy="1368" r="6"/><circle cx="210" cy="1382" r="6"/><circle cx="432" cy="1366" r="6"/><circle cx="315" cy="1399" r="6"/><circle cx="589" cy="1350" r="6"/><circle cx="221" cy="1430" r="6"/><circle cx="36" cy="1437" r="6"/><circle cx="110" cy="1446" r="10"/><circle cx="161" cy="1456" r="6"/><circle cx="98" cy="1485" r="6"/><circle cx="499" cy="1471" r="6"/><circle cx="573" cy="1464" r="6"/><circle cx="693" cy="1435" r="6"/>
          <circle cx="749" cy="1144" r="10"/><circle cx="781" cy="1174" r="10"/><circle cx="731" cy="1184" r="6"/><circle cx="822" cy="1243" r="10"/><circle cx="922" cy="1237" r="10"/><circle cx="884" cy="1262" r="6"/><circle cx="726" cy="1274" r="6"/><circle cx="829" cy="1340" r="6"/><circle cx="742" cy="1387" r="6"/><circle cx="843" cy="1396" r="6"/><circle cx="1020" cy="1172" r="6"/><circle cx="1052" cy="1170" r="6"/><circle cx="1074" cy="1211" r="10"/><circle cx="977" cy="1217" r="6"/><circle cx="1153" cy="1177" r="6"/><circle cx="1178" cy="1153" r="6"/><circle cx="1132" cy="1293" r="6"/><circle cx="1040" cy="1338" r="6"/><circle cx="1070" cy="1355" r="13"/><circle cx="1153" cy="1437" r="6"/><circle cx="1086" cy="1480" r="10"/><circle cx="881" cy="1501" r="6"/><circle cx="699" cy="1527" r="6"/><circle cx="734" cy="1545" r="10"/><circle cx="961" cy="1552" r="10"/><circle cx="1002" cy="1564" r="6"/><circle cx="1041" cy="1564" r="6"/><circle cx="1072" cy="1536" r="6"/><circle cx="1077" cy="1578" r="10"/><circle cx="1171" cy="1591" r="10"/><circle cx="1060" cy="1623" r="13"/><circle cx="1161" cy="1640" r="13"/><circle cx="982" cy="1614" r="6"/><circle cx="687" cy="1621" r="6"/><circle cx="728" cy="1633" r="6"/><circle cx="480" cy="1541" r="10"/><circle cx="470" cy="1573" r="6"/><circle cx="44" cy="1640" r="13"/><circle cx="366" cy="1635" r="6"/>
          <circle cx="1011" cy="1659" r="10"/><circle cx="973" cy="1685" r="10"/><circle cx="1108" cy="1688" r="6"/><circle cx="1175" cy="1677" r="6"/><circle cx="955" cy="1721" r="6"/><circle cx="959" cy="1773" r="10"/><circle cx="1009" cy="1796" r="6"/><circle cx="1017" cy="1851" r="6"/><circle cx="1163" cy="1890" r="6"/><circle cx="922" cy="1899" r="6"/><circle cx="907" cy="1940" r="6"/><circle cx="1100" cy="1938" r="10"/><circle cx="1037" cy="1942" r="8"/><circle cx="972" cy="1972" r="6"/><circle cx="46" cy="1890" r="6"/>
          <circle cx="46" cy="2021" r="13"/><circle cx="154" cy="2042" r="10"/><circle cx="50" cy="2057" r="6"/><circle cx="273" cy="2045" r="10"/><circle cx="117" cy="2075" r="6"/><circle cx="67" cy="2097" r="6"/><circle cx="260" cy="2075" r="6"/><circle cx="174" cy="2122" r="6"/><circle cx="30" cy="2147" r="6"/><circle cx="220" cy="2156" r="10"/><circle cx="260" cy="2145" r="6"/><circle cx="213" cy="2206" r="6"/><circle cx="97" cy="2225" r="6"/><circle cx="92" cy="2258" r="9"/><circle cx="770" cy="2258" r="6"/><circle cx="804" cy="2278" r="13"/><circle cx="909" cy="2271" r="6"/><circle cx="1029" cy="2226" r="6"/><circle cx="1055" cy="2230" r="10"/><circle cx="1070" cy="2265" r="6"/><circle cx="1062" cy="2307" r="6"/><circle cx="1040" cy="2335" r="10"/><circle cx="992" cy="2342" r="6"/><circle cx="811" cy="2326" r="6"/><circle cx="784" cy="2343" r="6"/><circle cx="695" cy="2321" r="6"/><circle cx="3" cy="2322" r="8"/><circle cx="1163" cy="2022" r="13"/><circle cx="1166" cy="2057" r="6"/><circle cx="1184" cy="2097" r="6"/>
        </g>
        <path d="M1105 2276Q1128 2290 1147 2284L1150 2276Q1180 2265 1181 2245L1174 2236M1174 2250L1181 2252"/>
      </svg>

      <div class="date">Sat 17 Jan</div>

      <div class="message in first wide">
        <p>We have now sold over 30k in<br>three jobs in the first week. You<br>guys rock !</p>
        <span class="meta">8:42 pm</span>
        <svg class="tail" width="32" height="54" viewBox="0 0 32 54"><path d="M16 0Q17 38 0 53Q15 54 25 46L32 20Z"/></svg>
      </div>

      <div class="message out w-838 turn">
        <p>thanks so much, i am happy to<br>hear that honestly</p>
        <span class="meta">8:47 pm <svg class="ticks" viewBox="0 0 54 35"><path d="M2 24L12 33L35 3M23 31L28 33L52 3"/></svg></span>
      </div>

      <div class="message out w-739 time-below">
        <p>you closed a third job also?</p>
        <span class="meta">8:47 pm <svg class="ticks" viewBox="0 0 54 35"><path d="M2 24L12 33L35 3M23 31L28 33L52 3"/></svg></span>
      </div>

      <!-- Clapping hands -->
      <svg class="clap" width="185" height="187" viewBox="480 60 555 561">
        <defs>
          <linearGradient id="skin" x1="0" y1="0" x2="1" y2="1"><stop offset="0" stop-color="#ffc83d"/><stop offset=".6" stop-color="#ffd24f"/><stop offset="1" stop-color="#ee9f1c"/></linearGradient>
        </defs>
        <path class="flash" d="M535 106L572 79L600 157ZM637 88L675 100L634 148ZM512 142L559 179L499 178ZM853 128L892 120L886 180ZM957 113L998 149L927 189ZM947 230L1001 209V249Z"/>
        <path fill="#e89a16" d="M765 520L806 583Q825 593 852 584L880 540Z"/>
        <g class="finger shade"><path d="M652 198L700 250M595 225L660 300M568 277L630 345M565 347L640 430L760 510"/><path d="M796 248L850 320"/></g>
        <g class="finger back"><path d="M652 196L700 250M594 224L660 300M567 276L630 345M564 345L640 430L760 505"/><path d="M796 248L850 320"/></g>
        <path fill="url(#skin)" d="M640 300L700 230L800 300Q890 320 925 350Q965 400 957 435L1011 470Q1008 570 905 607L868 605Q850 575 825 548L755 522Q700 490 640 410Z"/>
        <g class="finger shade"><path d="M848 250L880 300L925 365"/><path d="M697 196L830 345"/><path d="M638 227L780 375"/><path d="M612 283L745 430"/><path d="M611 357L730 475"/></g>
        <g class="finger"><path d="M849 246L888 300L925 380"/><path d="M698 192L840 345"/><path d="M640 223L800 380"/><path d="M614 279L770 430"/><path d="M612 352L690 430L780 500"/></g>
        <path fill="#ffd04a" d="M745 400L800 320L900 335Q948 370 950 430L945 480Q880 560 800 530L720 475Z"/>
        <path class="crease" d="M735 250L788 323M700 290L748 368M660 340L715 418M640 400Q690 470 765 522M866 298Q890 330 925 352"/>
      </svg>

      <div class="message out stamp">
        <span class="meta">8:48 pm <svg class="ticks" viewBox="0 0 54 35"><path d="M2 24L12 33L35 3M23 31L28 33L52 3"/></svg></span>
      </div>

      <div class="message in one-line w-355 reply">
        <p>Yup</p>
        <span class="meta">8:48 pm</span>
      </div>

      <div class="message in one-line w-850">
        <p>Still working on a fourth</p>
        <span class="meta">8:48 pm</span>
      </div>

      <div class="message in w-850">
        <p>Yeah, and we still have a few to<br>go to next week.</p>
        <span class="meta">8:49 pm</span>
        <svg class="tail" width="32" height="54" viewBox="0 0 32 54"><path d="M16 0Q17 38 0 53Q15 54 25 46L32 20Z"/></svg>
      </div>

      <div class="message out w-866 turn">
        <p>we are going to hit big numbers<br>this month.</p>
        <span class="meta">8:50 pm <svg class="ticks" viewBox="0 0 54 35"><path d="M2 24L12 33L35 3M23 31L28 33L52 3"/></svg></span>
      </div>

      <div class="message in emojis turn">
        <svg width="70" height="100" viewBox="0 0 70 100">
          <g stroke="#e39a1a" stroke-width="15" stroke-linecap="round"><path d="M8 25L15 66"/><path d="M60 8V64"/><path d="M29 46V62"/><path d="M45 43V60"/></g>
          <g stroke="#ffc94a" stroke-width="13" stroke-linecap="round"><path d="M8 24L16 66"/><path d="M60 8L59 64"/><path d="M29 45V58"/><path d="M44 42V56"/></g>
          <path fill="#ffc94a" d="M7 55L22 59L27 60L60 58L68 62V100H10Z"/>
          <path fill="none" stroke="#de9520" stroke-width="2" d="M24 62Q26 58 34 59L55 57Q62 58 68 62M21 50V60M36 48V57M52 46V56"/>
        </svg>
        <svg width="104" height="104" viewBox="0 0 104 104">
          <defs>
            <radialGradient id="face" cx=".5" cy=".5" r=".5"><stop offset=".7" stop-color="#ffd83a"/><stop offset=".9" stop-color="#ffb321"/><stop offset="1" stop-color="#f9960d"/></radialGradient>
            <linearGradient id="shine" x1="0" y1="0" x2="0" y2="1"><stop offset="0" stop-color="#fff6b0"/><stop offset=".5" stop-color="#fff36a"/><stop offset="1" stop-color="#ffd83a" stop-opacity="0"/></linearGradient>
            <linearGradient id="lens" x1="0" y1="0" x2="0" y2="1"><stop offset="0" stop-color="#8a8a8a"/><stop offset=".45" stop-color="#2c2c2c"/><stop offset="1" stop-color="#484848"/></linearGradient>
          </defs>
          <circle cx="52" cy="52" r="52" fill="url(#face)"/>
          <ellipse cx="52" cy="34" rx="41" ry="29" fill="url(#shine)"/>
          <path fill="#111" d="M7 32Q28 29 52 37Q76 29 97 32L95 38Q90 59 71 59Q58 57 52 42Q46 57 33 59Q14 59 9 38Z"/>
          <path fill="url(#lens)" d="M14 36Q30 33 46 39Q43 54 31 55Q17 53 14 36ZM90 36Q74 33 58 39Q61 54 73 55Q87 53 90 36Z"/>
        </svg>
      </div>

      <div class="scroll-down">
        <svg width="38" height="22" viewBox="0 0 38 22"><path d="M3 3L19 18L35 3"/></svg>
      </div>
    </div>

    <!-- Composer -->
    <div class="composer">
      <svg width="60" height="60" viewBox="0 0 60 60"><path d="M30 3V57M3 30H57"/></svg>
      <div class="input">
        <svg width="55" height="54" viewBox="0 0 55 54"><path d="M2 26Q2 2 22 2H34Q53 2 53 25Q53 34 46 40L38 47Q32 52 25 52Q2 52 2 32ZM51 30H43Q31 31 31 42V50"/></svg>
      </div>
      <svg class="camera" width="70" height="54" viewBox="0 0 70 54"><path d="M8 9H18Q21 9 22 7L25 4Q27 2 29 2H41Q43 2 45 4L48 7Q49 9 52 9H62Q67 9 67 14V47Q67 52 62 52H8Q3 52 3 47V14Q3 9 8 9Z"/><circle cx="35" cy="30" r="14"/><circle class="dot" cx="55" cy="19" r="3.500"/></svg>
      <svg class="mic" width="48" height="69" viewBox="0 0 48 69"><rect x="13" y="2" width="22" height="45" rx="11"/><path d="M2.500 35Q4 58 24 58T45.500 35M24 58V67"/></svg>
    </div>

  </div>
</body>
</html>
```
FILE: styles.css
```css
* {
  box-sizing: border-box;
}

body {
  margin: 0;
  background-color: #111;
  color: #fafafa;
  font-family: Inter, "Liberation Sans", sans-serif;
}

svg {
  display: block;
  flex-shrink: 0;
}

.phone {
  display: flex;
  flex-direction: column;
  width: 1200px;
  height: 2608px;
  overflow: hidden;
  background-color: #111;
}

/* Status bar */
.status-bar {
  display: flex;
  align-items: center;
  height: 166px;
  padding: 30px 105px 0 136px;
  color: #fff;
}

.clock {
  width: 114px;
  font-size: 50px;
  font-weight: 600;
}

.status-icons {
  display: flex;
  align-items: center;
  gap: 22px;
  margin-left: auto;
}

.battery {
  position: relative;
  width: 75px;
  height: 42px;
  margin-right: 7px;
  padding-right: 4px;
  border-radius: 14px;
  background: linear-gradient(to right, #fff 32px, #8b8b8b 32px);
  color: #111;
  font-size: 34px;
  font-weight: 700;
  line-height: 42px;
  text-align: center;
}

.battery::after {
  content: "";
  position: absolute;
  top: 14px;
  right: -7px;
  width: 5px;
  height: 14px;
  border-radius: 0 6px 6px 0;
  background-color: #8b8b8b;
}

/* Header */
.header {
  display: flex;
  align-items: center;
  height: 134px;
  padding: 0 79px 2px 27px;
}

.header svg {
  fill: none;
  stroke: #fafafa;
  stroke-width: 5;
  stroke-linecap: round;
  stroke-linejoin: round;
}

.header .back {
  stroke-width: 8;
}

.unread {
  width: 85px;
  margin-left: 31px;
  font-size: 54px;
}

.avatar {
  display: flex;
  align-items: center;
  justify-content: center;
  width: 108px;
  height: 108px;
  border: 1px solid #3c2c29;
  border-radius: 50%;
  background-color: #36211d;
}

.avatar svg {
  fill: #ff9472;
  stroke: none;
}

.name {
  margin-left: 31px;
  font-size: 47px;
  font-weight: 600;
  letter-spacing: -0.4px;
  white-space: nowrap;
}

.actions {
  display: flex;
  align-items: center;
  gap: 60px;
  margin-left: auto;
}

/* Conversation */
.chat {
  position: relative;
  display: flex;
  flex-direction: column;
  height: 2051px;
  padding: 37px 50px 0 49px;
  overflow: hidden;
  background-color: #0a0a0a;
}

.wallpaper {
  position: absolute;
  top: 0;
  left: 0;
  fill: none;
  stroke: #232323;
  stroke-width: 2.300;
  stroke-linecap: round;
  stroke-linejoin: round;
}

.wallpaper path,
.wallpaper circle,
.wallpaper ellipse {
  vector-effect: non-scaling-stroke;
}

.date {
  position: relative;
  align-self: center;
  width: 275px;
  height: 71px;
  border-radius: 26px;
  background-color: #161717;
  font-size: 43px;
  font-weight: 600;
  letter-spacing: 0.7px;
  line-height: 71px;
  text-align: center;
  white-space: nowrap;
}

.message {
  position: relative;
  display: grid;
  grid-template-columns: minmax(0, 1fr);
  flex-shrink: 0;
  align-self: flex-start;
  margin-top: 14px;
  padding: 15px 30px 19px 29px;
  border-radius: 34px;
  background-color: #242626;
  white-space: nowrap;
}

.message.out {
  align-self: flex-end;
  padding-right: 27px;
  background-color: #144d37;
}

.message.first {
  margin-top: 20px;
}

.message.turn {
  margin-top: 40px;
}

.message.reply {
  margin-top: 55px;
}

.wide {
  width: 859px;
}

.w-355 {
  width: 355px;
}

.w-739 {
  width: 739px;
}

.w-838 {
  width: 838px;
}

.w-850 {
  width: 850px;
}

.w-866 {
  width: 865px;
}

.message p {
  grid-area: 1 / 1;
  margin: 0;
  padding-bottom: 13px;
  font-size: 55px;
  letter-spacing: -0.9px;
  word-spacing: -0.9px;
  line-height: 77.7px;
}

.message.one-line p {
  padding-bottom: 9px;
}

.message.time-below p {
  padding-bottom: 60px;
}

.meta {
  display: flex;
  grid-area: 1 / 1;
  align-self: end;
  justify-self: end;
  color: #9b9d9d;
  font-size: 40px;
  word-spacing: -5px;
  line-height: 40px;
}

.out .meta {
  color: #a0b9ae;
}

.ticks {
  width: 54px;
  height: 35px;
  margin: 1px 0 0 11px;
  fill: none;
  stroke: #a0b9ae;
  stroke-width: 4.500;
  stroke-linecap: round;
  stroke-linejoin: round;
}

.tail {
  position: absolute;
  bottom: 0;
  left: -16px;
  fill: #242626;
}

.clap {
  position: relative;
  align-self: flex-end;
  margin: 34px 5px 9px 0;
}

.flash {
  fill: #b0b0b4;
}

.finger {
  fill: none;
  stroke: #ffcd45;
  stroke-width: 40;
  stroke-linecap: round;
}

.finger.back {
  stroke: #fbbd35;
}

.finger.shade {
  stroke: #d98f1a;
  stroke-width: 43;
}

.crease {
  fill: none;
  stroke: #b9771a;
  stroke-width: 4;
  stroke-linecap: round;
}

.message.stamp {
  width: 276px;
  height: 85px;
  margin-top: 0;
  padding-top: 23px;
  border-radius: 26px;
}

.stamp .meta {
  align-self: start;
}

.message.emojis {
  display: flex;
  gap: 46px;
  width: 301px;
  height: 130px;
  padding: 29px 0 0 48px;
}

.emojis svg + svg {
  margin-top: 4px;
}

.scroll-down {
  position: absolute;
  right: 27px;
  bottom: 71px;
  display: flex;
  align-items: center;
  justify-content: center;
  width: 96px;
  height: 96px;
  border-radius: 50%;
  background-color: #222323;
}

.scroll-down svg {
  fill: none;
  stroke: #fafafa;
  stroke-width: 5.500;
  stroke-linecap: round;
  stroke-linejoin: round;
}

/* Composer */
.composer {
  display: flex;
  align-items: center;
  height: 158px;
  padding: 0 50px 0 40px;
}

.composer svg {
  fill: none;
  stroke: #fafafa;
  stroke-width: 5;
  stroke-linecap: round;
  stroke-linejoin: round;
}

.composer .input svg {
  stroke-width: 4;
}

.composer .camera {
  margin-left: 56px;
  stroke-width: 4.500;
}

.composer .dot {
  fill: #fafafa;
  stroke: none;
}

.composer .mic {
  margin-left: 56px;
}

.input {
  display: flex;
  align-items: center;
  justify-content: flex-end;
  width: 779px;
  height: 105px;
  margin-left: 40px;
  padding-right: 34px;
  border: 1px solid #333;
  border-radius: 53px;
  background: linear-gradient(to right, #2b2a28, #292929 50%);
}
```
